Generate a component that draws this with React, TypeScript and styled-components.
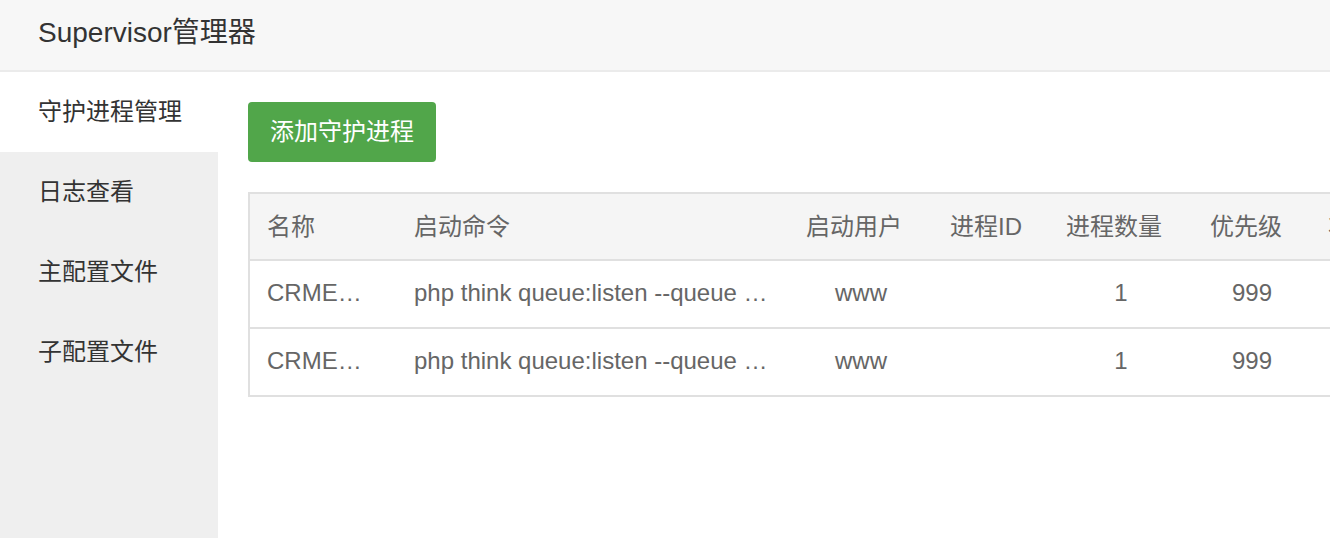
import styled, { createGlobalStyle } from 'styled-components';

const GlobalStyle = createGlobalStyle`
  html, body {
    margin: 0;
    padding: 0;
    overflow: hidden;
  }
  body {
    font-family: 'Liberation Sans', 'Noto Sans CJK SC', sans-serif;
    color: #333;
    background: #fff;
  }
`;

const StPage = styled.div`
  display: flex;
  flex-direction: column;
  height: 100vh;
`;

const StHeader = styled.header`
  height: 72px;
  box-sizing: border-box;
  flex-shrink: 0;
  display: flex;
  align-items: center;
  padding: 0 0 10px 38px;
  background: #f7f7f7;
  border-bottom: 2px solid #ebebeb;
  font-size: 28px;
  color: #333;
`;

const StBody = styled.div`
  flex: 1;
  display: flex;
  min-height: 0;
`;

const StSidebar = styled.nav`
  width: 218px;
  flex-shrink: 0;
  background: #efefef;
  display: flex;
  flex-direction: column;
`;

const StNavItem = styled.a<{ active?: boolean }>`
  height: 80px;
  box-sizing: border-box;
  display: flex;
  align-items: center;
  padding: 0 0 6px 38px;
  font-size: 24px;
  color: #333;
  background: ${(props) => (props.active ? '#fff' : 'transparent')};
  cursor: pointer;
`;

const StMain = styled.main`
  flex: 1;
  min-width: 0;
  overflow: hidden;
  padding: 30px 0 0 30px;
  display: flex;
  flex-direction: column;
  align-items: flex-start;
  gap: 30px;
`;

const StAddButton = styled.button`
  height: 60px;
  padding: 0 22px 5px;
  border: none;
  border-radius: 4px;
  background: #51a64a;
  color: #fff;
  font-family: inherit;
  font-size: 24px;
  cursor: pointer;
`;

const StTable = styled.table`
  width: 1240px;
  flex-shrink: 0;
  table-layout: fixed;
  border-collapse: collapse;
  border: 2px solid #e0e0e0;
  font-size: 24px;
  color: #666;
`;

const StHeadRow = styled.tr`
  background: #f5f5f5;
  height: 67px;
`;

const StTh = styled.th<{ width: number }>`
  box-sizing: border-box;
  width: ${(props) => props.width}px;
  padding: 0 17px 5px;
  text-align: left;
  font-weight: normal;
  white-space: nowrap;
  overflow: hidden;
`;

const StRow = styled.tr`
  height: 68px;
  border-top: 2px solid #e0e0e0;
`;

const StTd = styled.td<{ center?: boolean }>`
  padding: 0 17px 2px;
  text-align: ${(props) => (props.center ? 'center' : 'left')};
  white-space: nowrap;
  overflow: hidden;
  text-overflow: ellipsis;
`;

const StNameCell = styled(StTd)`
  padding-right: 32px;
`;

const columns = [
  { title: '名称', width: 148 },
  { title: '启动命令', width: 392 },
  { title: '启动用户', width: 144 },
  { title: '进程ID', width: 116 },
  { title: '进程数量', width: 144 },
  { title: '优先级', width: 118 },
  { title: '状态', width: 178 },
];

const processes = [
  {
    name: 'CRMEB_queue',
    command: 'php think queue:listen --queue default',
    user: 'www',
    pid: '',
    count: 1,
    priority: 999,
    status: '运行中',
  },
  {
    name: 'CRMEB_timer',
    command: 'php think queue:listen --queue delay',
    user: 'www',
    pid: '',
    count: 1,
    priority: 999,
    status: '运行中',
  },
];

const navItems = ['守护进程管理', '日志查看', '主配置文件', '子配置文件'];

function App() {
  return (
    <StPage>
      <GlobalStyle />
      <StHeader>Supervisor管理器</StHeader>
      <StBody>
        <StSidebar>
          {navItems.map((item, i) => (
            <StNavItem key={item} active={i === 0}>
              {item}
            </StNavItem>
          ))}
        </StSidebar>
        <StMain>
          <StAddButton>添加守护进程</StAddButton>
          <StTable>
            <thead>
              <StHeadRow>
                {columns.map((col) => (
                  <StTh key={col.title} width={col.width}>
                    {col.title}
                  </StTh>
                ))}
              </StHeadRow>
            </thead>
            <tbody>
              {processes.map((p) => (
                <StRow key={p.name}>
                  <StNameCell>{p.name}</StNameCell>
                  <StTd>{p.command}</StTd>
                  <StTd center>{p.user}</StTd>
                  <StTd center>{p.pid}</StTd>
                  <StTd center>{p.count}</StTd>
                  <StTd center>{p.priority}</StTd>
                  <StTd center>{p.status}</StTd>
                </StRow>
              ))}
            </tbody>
          </StTable>
        </StMain>
      </StBody>
    </StPage>
  );
}

export default App;
